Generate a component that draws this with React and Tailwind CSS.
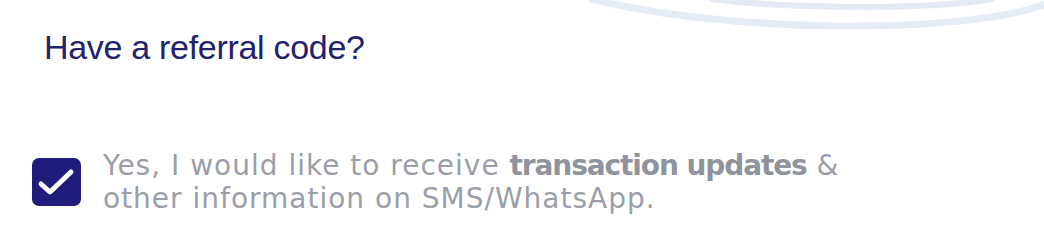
const Arcs = () => (
  <svg
    className="absolute top-0 right-0 pointer-events-none"
    width="1044"
    height="60"
    viewBox="0 0 1044 60"
    fill="none"
  >
    <path
      d="M592 -1 C 720 32, 960 36, 1046 4"
      stroke="#e5ecf6"
      strokeWidth="7"
      strokeLinecap="round"
    />
    <path
      d="M712 -1 C 790 9, 930 10, 992 -1"
      stroke="#e3eaf5"
      strokeWidth="6"
      strokeLinecap="round"
    />
  </svg>
)

const CheckBox = () => (
  <div className="w-[49px] h-[48px] shrink-0 rounded-[7px] bg-[#201d7a] flex items-center justify-center">
    <svg width="49" height="48" viewBox="0 0 49 48" fill="none">
      <path
        d="M9 26 L18 34 L39 14"
        stroke="#ffffff"
        strokeWidth="5"
        strokeLinecap="round"
        strokeLinejoin="round"
      />
    </svg>
  </div>
)

export default function App() {
  return (
    <div className="relative w-[1044px] h-[241px] bg-white overflow-hidden">
      <Arcs />
      <div className="relative pt-[30px] pl-[44px]">
        <h2 className="text-[34px] leading-[34px] tracking-[-0.3px] text-[#23206e] font-['Liberation_Sans',Arial,sans-serif]">
          Have a referral code?
        </h2>
      </div>
      <div className="relative mt-[85px] pl-[32px] flex items-center gap-[22px]">
        <CheckBox />
        <p className="text-[28px] leading-[33px] tracking-[1px] text-[#9a9ea8] font-['DejaVu_Sans',sans-serif]">
          Yes, I would like to receive{" "}
          <span className="font-bold tracking-[-1.1px] text-[#8f939d]">transaction updates</span> &
          <br />
          other information on SMS/WhatsApp.
        </p>
      </div>
    </div>
  )
}
